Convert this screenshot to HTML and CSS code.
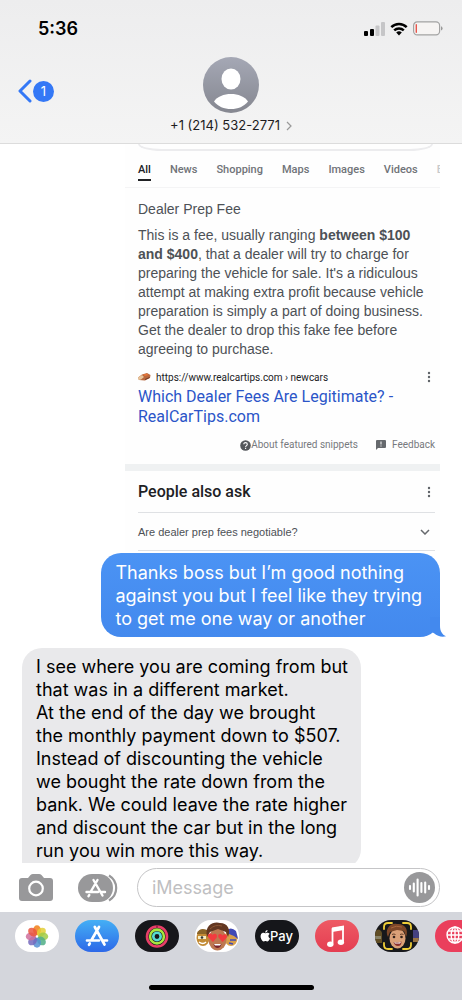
FILE: index.html
```html
<!DOCTYPE html>
<html lang="en">
<head>
  <meta charset="utf-8">
  <meta name="viewport" content="width=device-width, initial-scale=1">
  <title>Messages</title>
  <link rel="stylesheet" href="styles.css">
</head>
<body>
  <header class="header">
    <div class="status-bar">
      <span class="clock">5:36</span>
      <div class="status-icons">
        <svg width="21" height="14" viewBox="0 0 21 14">
          <rect x="0" y="9" width="4" height="5" rx="1"/>
          <rect x="6" y="7" width="4" height="7" rx="1"/>
          <rect x="11.500" y="3.500" width="4" height="10.500" rx="1" fill="#c6c6c8"/>
          <rect x="17" y="0" width="4" height="14" rx="1" fill="#c6c6c8"/>
        </svg>
        <svg width="18" height="14" viewBox="0 0 18 14">
          <path d="M1.300 5.200a11 11 0 0 1 15.400 0M4.200 8.300a7 7 0 0 1 9.600 0" fill="none" stroke="#000" stroke-width="2.500"/>
          <path d="M9 13.500l-2.800-2.900a4 4 0 0 1 5.600 0z"/>
        </svg>
        <svg width="30" height="15" viewBox="0 0 30 15">
          <rect x="0.600" y="0.900" width="26" height="13" rx="3.600" fill="#f6f4f3" stroke="#a3a3a3" stroke-width="1.200"/>
          <rect x="2.600" y="3" width="1.400" height="9" rx=".7" fill="#e8564c"/>
          <path d="M28 5.200q1.600.6 1.600 2.200t-1.600 2.200z" fill="#999"/>
        </svg>
      </div>
    </div>
    <nav class="nav">
      <a class="back" href="#" aria-label="Back">
        <svg width="14" height="24" viewBox="0 0 14 24"><path d="M12 2L2 12l10 10" fill="none" stroke="#3478f6" stroke-width="3" stroke-linecap="round" stroke-linejoin="round"/></svg>
        <span class="badge">1</span>
      </a>
      <a class="contact" href="#">
        <svg width="56" height="56" viewBox="0 0 56 56">
          <defs>
            <linearGradient id="avatar" x1="0" y1="0" x2="0" y2="1"><stop offset="0" stop-color="#a5a8b5"/><stop offset="1" stop-color="#858790"/></linearGradient>
          </defs>
          <circle cx="28" cy="28" r="28" fill="url(#avatar)"/>
          <ellipse cx="28" cy="22" rx="9.500" ry="10.500" fill="#fff"/>
          <path d="M11 44.500C14 39.500 21 37 28 37s14 2.500 17 7.500C41 49.500 35 52 28 52s-13-2.500-17-7.500z" fill="#fff"/>
        </svg>
        <span class="number">+1 (214) 532-2771
          <svg width="6" height="10" viewBox="0 0 6 10"><path d="M1 1l4 4-4 4" fill="none" stroke="#999" stroke-width="1.200"/></svg>
        </span>
      </a>
    </nav>
  </header>

  <main class="chat">
    <article class="snippet">
      <div class="search-edge"></div>
      <nav class="tabs">
        <a class="tab active" href="#">All</a>
        <a class="tab" href="#">News</a>
        <a class="tab" href="#">Shopping</a>
        <a class="tab" href="#">Maps</a>
        <a class="tab" href="#">Images</a>
        <a class="tab" href="#">Videos</a>
        <a class="tab faded" href="#">Books</a>
      </nav>
      <div class="answer">
        <h2 class="answer-title">Dealer Prep Fee</h2>
        <p class="answer-text">This is a fee, usually ranging <b>between $100 and $400</b>, that a dealer will try to charge for preparing the vehicle for sale. It's a ridiculous attempt at making extra profit because vehicle preparation is simply a part of doing business. Get the dealer to drop this fake fee before agreeing to purchase.</p>
        <div class="source">
          <svg width="13" height="10" viewBox="0 0 13 10">
            <path d="M0 5.500L4 2.500 9 1l3.500 2-.5 3-5 2.500L1 8z" fill="#b9683d"/>
            <path d="M0 5.500L4 3l2 2-3 2.500L.5 8z" fill="#e8c59c"/>
            <path d="M5 2.500l4-.8 1.500 1.200L7 4z" fill="#e87538"/>
            <path d="M7 7.500l4.500-2" stroke="#6e3b2d"/>
          </svg>
          <span class="url">https://www.realcartips.com › newcars</span>
          <button class="more" aria-label="More"><svg width="4" height="12" viewBox="0 0 4 12"><circle cx="2" cy="2" r="1.200"/><circle cx="2" cy="6" r="1.200"/><circle cx="2" cy="10" r="1.200"/></svg></button>
        </div>
        <a class="result" href="#">Which Dealer Fees Are Legitimate? - RealCarTips.com</a>
        <div class="feedback">
          <a href="#">
            <svg width="11" height="11" viewBox="0 0 11 11"><circle cx="5.500" cy="5.500" r="5.300" fill="#55585c"/><path d="M3.800 4.300c0-2.300 3.500-2.200 3.500 0 0 1.300-1.700 1.300-1.700 2.700M5.600 7.800v1.100" fill="none" stroke="#fff" stroke-width="1.100"/></svg>About featured snippets</a>
          <a class="feedback-link" href="#">
            <svg width="10" height="10" viewBox="0 0 10 10"><path d="M1 0h8q1 0 1 1v6q0 1-1 1H2L0 10V1q0-1 1-1z" fill="#66696d"/><path d="M5 1.500v3M5 5.500v1" stroke="#fff"/></svg>Feedback</a>
        </div>
      </div>
      <div class="band"></div>
      <section class="ask">
        <div class="ask-head">
          <h2 class="ask-title">People also ask</h2>
          <button class="more" aria-label="More"><svg width="4" height="12" viewBox="0 0 4 12"><circle cx="2" cy="2" r="1.200"/><circle cx="2" cy="6" r="1.200"/><circle cx="2" cy="10" r="1.200"/></svg></button>
        </div>
        <button class="question">Are dealer prep fees negotiable?
          <svg width="10" height="6" viewBox="0 0 10 6"><path d="M1 1l4 4 4-4" fill="none" stroke="#66696d" stroke-width="1.500"/></svg>
        </button>
      </section>
    </article>

    <div class="bubble sent">
      Thanks boss but I’m good nothing<br>against you but I feel like they trying<br>to get me one way or another
      <svg class="tail" width="18" height="20" viewBox="0 0 18 20"><path d="M2 0h10v9c0 5 2 8.500 6 10.300-4 1.200-8.500 0-12-3L2 14z" fill="#4389ee"/></svg>
    </div>

    <div class="bubble received">
      I see where you are coming from but<br>that was in a different market.<br>At the end of the day we brought<br>the monthly payment down to $507.<br>Instead of discounting the vehicle<br>we bought the rate down from the<br>bank. We could leave the rate higher<br>and discount the car but in the long<br>run you win more this way.
    </div>
  </main>

  <form class="composer">
    <button class="tool" type="button" aria-label="Camera">
      <svg width="36" height="28" viewBox="0 0 36 28">
        <path d="M4 4h6l2.500-3Q13.500 0 15 0h6q1.500 0 2.500 1L26 4h6q3 0 3 3v17q0 3-3 3H4q-3 0-3-3V7q0-3 3-3z" fill="#98989a"/>
        <circle cx="18" cy="14.500" r="6.800" fill="none" stroke="#fff" stroke-width="2.200"/>
      </svg>
    </button>
    <button class="tool" type="button" aria-label="Apps">
      <svg width="40" height="28" viewBox="0 0 40 28">
        <path d="M14 0h7a14 14 0 0 1 0 28h-7a14 14 0 0 1 0-28z" fill="#98989a"/>
        <path d="M31 1.500Q38.200 6 38.200 14T31 26.500" fill="none" stroke="#98989a" stroke-width="2.200"/>
        <path d="M19.500 6L12.500 18M15.500 6l9 15.500M8.500 18H20M23 18h4M11.300 21l-.8 1.200" fill="none" stroke="#fff" stroke-width="2.400" stroke-linecap="round"/>
      </svg>
    </button>
    <div class="field">
      <input class="message" type="text" placeholder="iMessage" aria-label="iMessage">
      <button class="voice" type="button" aria-label="Record audio">
        <svg width="31" height="31" viewBox="0 0 31 31">
          <circle cx="15.500" cy="15.500" r="15.500" fill="#98989a"/>
          <path d="M6 14v3M9.800 11.500v8M13.600 7.500v16M17.400 11v9M21.200 10.500v10M25 14v3" fill="none" stroke="#fff" stroke-width="2.100" stroke-linecap="round"/>
        </svg>
      </button>
    </div>
  </form>

  <footer class="drawer">
    <div class="apps">
      <button class="app" aria-label="Photos">
        <svg width="44" height="32" viewBox="0 0 44 32">
          <rect width="44" height="32" fill="#fff"/>
          <g transform="translate(22 16.500)">
            <ellipse cy="-6.200" rx="3.900" ry="5" fill="#f3923a"/>
            <ellipse cy="-6.200" rx="3.900" ry="5" fill="#e3cf35" transform="rotate(45)" opacity=".85"/>
            <ellipse cy="-6.200" rx="3.900" ry="5" fill="#a0cb45" transform="rotate(90)" opacity=".85"/>
            <ellipse cy="-6.200" rx="3.900" ry="5" fill="#4fae86" transform="rotate(135)" opacity=".85"/>
            <ellipse cy="-6.200" rx="3.900" ry="5" fill="#5590d2" transform="rotate(180)" opacity=".85"/>
            <ellipse cy="-6.200" rx="3.900" ry="5" fill="#7469bc" transform="rotate(225)" opacity=".85"/>
            <ellipse cy="-6.200" rx="3.900" ry="5" fill="#cf6f9c" transform="rotate(270)" opacity=".85"/>
            <ellipse cy="-6.200" rx="3.900" ry="5" fill="#ea563f" transform="rotate(315)" opacity=".85"/>
          </g>
        </svg>
      </button>
      <button class="app" aria-label="App Store">
        <svg width="44" height="32" viewBox="0 0 44 32">
          <defs><linearGradient id="store" x1="0" y1="0" x2="0" y2="1"><stop offset="0" stop-color="#44aff5"/><stop offset="1" stop-color="#2d68e8"/></linearGradient></defs>
          <rect width="44" height="32" fill="url(#store)"/>
          <path d="M24 7L16.500 20M19.800 7l9.700 17.500M12 20.500h12M28.500 20.500H32M14.800 23.500l-.8 1.300" fill="none" stroke="#fff" stroke-width="2.700" stroke-linecap="round"/>
        </svg>
      </button>
      <button class="app" aria-label="Activity">
        <svg width="44" height="32" viewBox="0 0 44 32">
          <rect width="44" height="32" fill="#17171b"/>
          <g fill="none" stroke-width="2.600">
            <circle cx="22" cy="16.500" r="10" stroke="#e83e67"/>
            <circle cx="22" cy="16.500" r="6.900" stroke="#a5e63f"/>
            <circle cx="22" cy="16.500" r="3.700" stroke="#57dbd2"/>
          </g>
          <path d="M22 5.200v2.600" stroke="#8e2040" stroke-width="1.500"/>
        </svg>
      </button>
      <button class="app" aria-label="Memoji stickers">
        <svg width="44" height="32" viewBox="0 0 44 32">
          <rect width="44" height="32" fill="#fff"/>
          <!-- left and right faces -->
          <ellipse cx="8" cy="18" rx="6.500" ry="8" fill="#c28b35"/>
          <path d="M2 13q3-6 10-3l1 4H2z" fill="#8a6428"/>
          <path d="M3 16h8v3H3z" fill="#f5edc8"/><circle cx="7" cy="17.500" r="1.300" fill="#333"/>
          <path d="M4 22q4 3 7 0" stroke="#fff" stroke-width="1.500" fill="none"/>
          <ellipse cx="36" cy="18" rx="6.500" ry="8" fill="#d8a04b"/>
          <path d="M30 11q6-5 11 0l2 8-4-3-5-2z" fill="#4149b5"/>
          <path d="M35 20h6M34 23l4 1" stroke="#4149b5" stroke-width="1.500"/>
          <!-- middle face -->
          <ellipse cx="22.500" cy="19.500" rx="9" ry="11" fill="#bd7850"/>
          <path d="M12 17C9 4 20 1 25 3c8 0 11 7 8 14l-2-5-8-3-8 3z" fill="#623721"/>
          <path d="M15 9q5-5 12-3" stroke="#8d5734" fill="none"/>
          <path d="M18 22l-5-5c-1-3.500 3-4.500 4.500-2 2-2.500 5.500-.5 4.300 2.500zM27.500 22l-4-4.500c-1.500-3.500 2-4.500 4-2 2.500-2.500 5.500-.5 4.300 2.300z" fill="#f23b3f"/>
          <path d="M18.500 24h8q-1 4-4 4t-4-4z" fill="#7b252b"/><path d="M19 24h7l-1 1.500h-5z" fill="#fff"/>
        </svg>
      </button>
      <button class="app" aria-label="Apple Pay">
        <svg width="44" height="32" viewBox="0 0 44 32">
          <rect width="44" height="32" fill="#15161a"/>
          <path transform="translate(4.500 10) scale(.48)" fill="#fff" d="M12.152 6.896c-.948 0-2.415-1.078-3.960-1.040-2.040.027-3.910 1.183-4.961 3.014-2.117 3.675-.546 9.103 1.519 12.090 1.013 1.454 2.208 3.090 3.792 3.039 1.520-.065 2.090-.987 3.935-.987 1.831 0 2.350.987 3.960.948 1.637-.026 2.676-1.480 3.676-2.948 1.156-1.688 1.636-3.325 1.662-3.415-.039-.013-3.182-1.221-3.220-4.857-.026-3.040 2.480-4.494 2.597-4.559-1.429-2.090-3.623-2.324-4.390-2.376-2-.156-3.675 1.090-4.610 1.090zM15.530 3.830c.843-1.012 1.400-2.427 1.245-3.830-1.207.052-2.662.805-3.532 1.818-.780.896-1.454 2.338-1.273 3.714 1.338.104 2.715-.688 3.559-1.701"/>
          <text class="pay" x="15" y="21">Pay</text>
        </svg>
      </button>
      <button class="app" aria-label="Music">
        <svg width="44" height="32" viewBox="0 0 44 32">
          <defs><linearGradient id="music" x1="0" y1="0" x2="0" y2="1"><stop offset="0" stop-color="#ee5a64"/><stop offset="1" stop-color="#e43d51"/></linearGradient></defs>
          <rect width="44" height="32" fill="url(#music)"/>
          <path d="M17.500 23.500V9L28 7v14.500" fill="none" stroke="#fff" stroke-width="1.800"/>
          <path d="M17 7.500L29 5.500v4.500l-12 2z" fill="#fff"/>
          <ellipse cx="15.300" cy="24.300" rx="3.200" ry="2.700" fill="#fff"/><ellipse cx="25.900" cy="22.300" rx="3.200" ry="2.700" fill="#fff"/>
        </svg>
      </button>
      <button class="app" aria-label="Memoji camera">
        <svg width="44" height="32" viewBox="0 0 44 32">
          <rect width="44" height="32" fill="#17181b"/>
          <path d="M0 11q5-4 7 2v10H0z" fill="#604d24"/><path d="M0 16h6v3H0z" fill="#888266"/>
          <path d="M38 10h6v12h-6z" fill="#454180"/><path d="M38 18h6v4h-6z" fill="#9a7442"/>
          <ellipse cx="22.500" cy="18.500" rx="8" ry="10" fill="#dba078"/>
          <path d="M13 17C9 9 16 2 22 4c8-1 12 6 9 13l-2-6-7-1-7 2z" fill="#7d4728"/>
          <path d="M16 8q5-3 11-1" fill="none" stroke="#a8663c"/>
          <circle cx="19" cy="17" r="1.300" fill="#34211b"/><circle cx="26.500" cy="17" r="1.300" fill="#34211b"/>
          <path d="M17 14.500q2-1 3.500 0M25 14.500q2-1 3.500 0" fill="none" stroke="#66402a"/>
          <path d="M18.500 22q4 1 8-.5 0 4.500-3.500 4.500t-4.500-4z" fill="#8a3031"/><path d="M19 22.300q3.500.8 7-.3l-1 1.500h-5z" fill="#fff"/>
          <path d="M9 9V7q0-4 4-4h4M28 3h4q4 0 4 4v2M36 23v2q0 4-4 4h-4M17 29h-4q-4 0-4-4v-2" fill="none" stroke="#f0cf38" stroke-width="1.800" stroke-linecap="round"/>
        </svg>
      </button>
      <button class="app" aria-label="Images">
        <svg width="44" height="32" viewBox="0 0 44 32">
          <rect width="44" height="32" fill="#ea3f5c"/>
          <g fill="none" stroke="#fff" stroke-width="1.400">
            <circle cx="20" cy="15" r="8"/><ellipse cx="20" cy="15" rx="3.800" ry="8"/>
            <path d="M20 7v16M12 15h16M13.500 11h13M13.500 19h13"/>
          </g>
        </svg>
      </button>
    </div>
    <div class="home-bar"></div>
  </footer>
</body>
</html>
```
FILE: styles.css
```css
* {
  box-sizing: border-box;
}
body {
  margin: 0;
  height: 100vh;
  display: flex;
  flex-direction: column;
  overflow: hidden;
  background-color: #fff;
  color: #000;
  font-family: Inter, "Liberation Sans", sans-serif;
}
a {
  color: inherit;
  text-decoration: none;
}
button {
  padding: 0;
  border: 0;
  background: none;
  color: inherit;
  font: inherit;
}
svg {
  display: block;
  flex: none;
}

/* header */
.header {
  flex: none;
  background: linear-gradient(#ededee, #f4f4f4);
  border-bottom: 1px solid #dcdcdc;
}
.status-bar {
  display: flex;
  align-items: center;
  justify-content: space-between;
  height: 57px;
  padding: 0 19px 0 38px;
}
.clock {
  font-size: 18px;
  font-weight: 600;
}
.status-icons {
  display: flex;
  align-items: center;
  gap: 5px;
}
.nav {
  display: grid;
  grid-template-columns: 1fr auto 1fr;
  padding: 0 18px 9px;
}
.back {
  display: flex;
  align-items: center;
  align-self: start;
  gap: 1px;
  padding-top: 22px;
}
.badge {
  width: 21px;
  border-radius: 50%;
  background-color: #3478f6;
  color: #fff;
  font-size: 13px;
  line-height: 21px;
  text-align: center;
}
.contact {
  display: flex;
  flex-direction: column;
  align-items: center;
  gap: 4px;
}
.number {
  display: flex;
  align-items: center;
  gap: 6px;
  color: #1c1c1e;
  font-size: 13px;
  line-height: 17px;
}

/* conversation */
.chat {
  flex: 1;
  min-height: 0;
  display: flex;
  flex-direction: column;
  padding: 0 22px;
  overflow: hidden;
}
.snippet {
  flex: none;
  margin: 0 0 2px 103px;
  background-color: #fefefe;
  color: #4d5156;
  font-family: "Liberation Sans", Arial, sans-serif;
}
.search-edge {
  height: 7px;
  margin: 0 7px 0 13px;
  border: 2px solid #ececee;
  border-top: 0;
  border-radius: 0 0 24px 24px / 0 0 7px 7px;
}
.tabs {
  display: flex;
  gap: 19px;
  padding: 9px 0 6px 13px;
  border-bottom: 1px solid #f4f4f5;
  overflow: hidden;
  color: #707378;
  font-family: Roboto, sans-serif;
  font-size: 11px;
  font-weight: 500;
  line-height: 19px;
}
.tab {
  border-bottom: 2px solid transparent;
}
.tab.active {
  border-color: #202124;
  color: #202124;
}
.tab.faded {
  color: #c8c9cb;
}
.answer {
  padding: 12px 5px 11px 13px;
}
.answer-title {
  margin: 0 0 7px;
  font-size: 14px;
  font-weight: 400;
  line-height: 19px;
}
.answer-text {
  margin: 0 0 10px;
  font-size: 14px;
  line-height: 19px;
}
.source {
  display: flex;
  align-items: center;
  gap: 5px;
  height: 16px;
  margin-bottom: 2px;
  color: #202124;
  font-family: Roboto, sans-serif;
  font-size: 10px;
}
.more {
  margin-left: auto;
  padding-right: 4px;
  fill: #5f6368;
}
.result {
  display: block;
  margin-bottom: 10px;
  color: #2b55c8;
  font-family: Roboto, sans-serif;
  font-size: 16px;
  line-height: 20px;
}
.feedback {
  display: flex;
  justify-content: flex-end;
  gap: 18px;
  color: #77797d;
  font-family: Roboto, sans-serif;
  font-size: 10px;
  line-height: 16px;
}
.feedback a {
  display: flex;
  align-items: center;
}
.feedback .feedback-link {
  gap: 6px;
}
.band {
  height: 7px;
  background-color: #eff1f2;
}
.ask {
  padding: 0 5px 0 13px;
}
.ask-head {
  display: flex;
  align-items: center;
  height: 42px;
  border-bottom: 1px solid #dfe1e4;
}
.ask-title {
  margin: 0;
  color: #202124;
  font-family: Roboto, sans-serif;
  font-size: 16px;
  font-weight: 500;
}
.question {
  display: flex;
  align-items: center;
  justify-content: space-between;
  width: 100%;
  height: 38px;
  padding-right: 5px;
  border-bottom: 1px solid #dfe1e4;
  font-size: 11px;
}
.bubble {
  position: relative;
  flex: none;
  width: 81%;
  padding: 8px 0 7px 14px;
  font-size: 18px;
  line-height: 23px;
  white-space: nowrap;
}
.sent {
  align-self: flex-end;
  margin-bottom: 11px;
  border-radius: 20px;
  background: linear-gradient(#4b93f4, #4389ee);
  color: #fff;
}
.tail {
  position: absolute;
  right: -6px;
  bottom: 0;
}
.received {
  align-self: flex-start;
  padding-top: 7px;
  border-radius: 20px 20px 20px 0;
  background-color: #e9e9eb;
}

/* message box */
.composer {
  flex: none;
  display: flex;
  align-items: center;
  gap: 24px;
  padding: 5px 22px 5px 18px;
}
.field {
  flex: 1;
  display: flex;
  align-items: center;
  min-width: 0;
  height: 39px;
  margin-left: -5px;
  padding: 0 4px 0 14px;
  border: 1px solid #c5c5c7;
  border-radius: 20px;
}
.message {
  flex: 1;
  min-width: 0;
  padding: 0;
  border: 0;
  outline: 0;
  background: none;
  font: inherit;
  font-size: 18px;
}
.message::placeholder {
  color: #bfbfc2;
}

/* app drawer */
.drawer {
  flex: none;
  background-color: #d4d6dc;
}
.apps {
  display: flex;
  gap: 16px;
  height: 73px;
  padding: 8px 0 0 15px;
  overflow: hidden;
}
.app {
  flex: none;
  width: 44px;
  height: 32px;
  border-radius: 16px;
  overflow: hidden;
}
.pay {
  fill: #fff;
  font-size: 13px;
  font-weight: 500;
}
.home-bar {
  width: 165px;
  height: 5px;
  margin: 0 auto 10px;
  border-radius: 3px;
  background-color: #000;
}
```
